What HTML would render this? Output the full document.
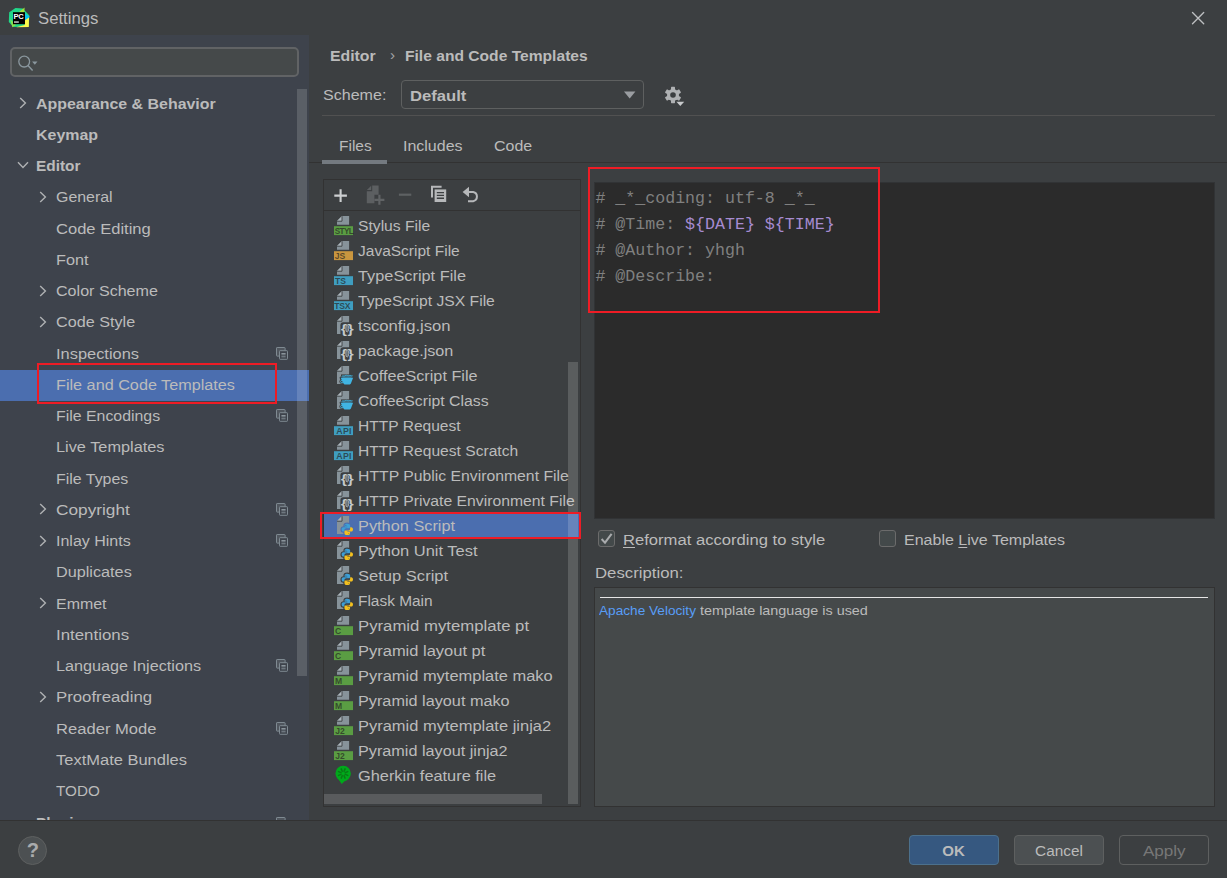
<!DOCTYPE html>
<html lang="en">
<head>
<meta charset="utf-8">
<title>Settings</title>
<style>
*{box-sizing:border-box;margin:0;padding:0}
html,body{width:1227px;height:878px;overflow:hidden;background:#3c3f41}
body{position:relative;font-family:"Liberation Sans",sans-serif;font-size:15.4px;color:#bbbbbb;-webkit-font-smoothing:antialiased}
.abs{position:absolute}
.t{white-space:pre;display:inline-block}
/* title bar */
#title{position:absolute;left:0;top:0;width:1227px;height:35px;background:#3c3f41}
#title .ttl{position:absolute;left:38px;top:9.1px;font-size:16px;line-height:20px;color:#bbbbbb}
#logo{position:absolute;left:8px;top:7px}
#close{position:absolute;left:1190px;top:10px}
/* sidebar */
#side{position:absolute;left:0;top:35px;width:309px;height:785px;background:#3e434c;overflow:hidden}
#search{position:absolute;left:10px;top:12.4px;width:289px;height:30px;background:#45494a;border:2px solid #616365;border-radius:5px}
#search svg{position:absolute;left:5.5px;top:4px}
.srow{position:absolute;left:0;width:309px;height:31.25px}
.srow.sel{background:#4b6eaf;height:31px}
.srow.b{font-weight:bold}
.srow .lbl{position:absolute;top:4.7px;line-height:20.7px}
.srow .cv{position:absolute;line-height:0}
.srow .pj{position:absolute;left:275.6px;top:7.8px;line-height:0}
#sthumb{position:absolute;left:297px;top:54px;width:10px;height:587px;background:rgba(255,255,255,0.15)}
/* bottom */
#sep{position:absolute;left:0;top:820px;width:1227px;height:1px;background:#323232}
.btn{position:absolute;top:835px;width:90px;height:30px;border-radius:4px;border:1px solid #5e6060;background:#4c5052;text-align:center;line-height:29.8px;color:#bbbbbb}
#ok{left:909px;background:#365880;border-color:#4c708c;font-weight:bold}
#cancel{left:1014px}
#apply{left:1119px;background:#3c3f41;color:#777777}
#help{position:absolute;left:18px;top:836px;width:29px;height:29px;border-radius:50%;background:#4c5052;border:1px solid #5e6060;text-align:center;line-height:27.4px;font-weight:bold;font-size:20px;color:#a9abad;padding-left:0.6px}
/* right header */
#bc{position:absolute;left:330px;top:46.1px;font-weight:bold;line-height:20.7px;white-space:nowrap}
#schemeL{position:absolute;left:323px;top:85px;line-height:20.7px}
#combo{position:absolute;left:401px;top:80px;width:243px;height:29px;border:1px solid #5e6060;border-radius:4px;font-weight:bold}
#combo .t{position:absolute;left:7.8px;top:4.6px;line-height:20.7px}
#combo svg{position:absolute;left:222px;top:10.4px}
#gear{position:absolute;left:664px;top:86px}
#hsep{position:absolute;left:322px;top:115px;width:893px;height:1px;background:#515151}
.tab{position:absolute;top:136.2px;line-height:20.7px}
#tabline{position:absolute;left:309px;top:162px;width:918px;height:1px;background:#323232}
#tabul{position:absolute;left:322px;top:160px;width:65px;height:4px;background:#747a80}
/* list */
#list{position:absolute;left:323px;top:179px;width:258px;height:628px;border:1px solid #323232;overflow:hidden}
#tb{position:absolute;left:0;top:0;width:256px;height:31px;border-bottom:1px solid #323232}
#tb svg{position:absolute}
#rows{position:absolute;left:0;top:31px;width:256px;height:595px;overflow:hidden}
.frow{position:absolute;left:0;width:256px;height:25px}
.frow.sel{background:#4b6eaf}
.frow .fi{position:absolute;left:10px;top:3px}
.frow .fl{position:absolute;left:34.4px;top:3.4px;line-height:20.7px}
#vthumb{position:absolute;left:244px;top:182px;width:10px;height:442px;background:rgba(255,255,255,0.155)}
#hthumb{position:absolute;left:0;top:614px;width:218px;height:10px;background:#595b5d}
/* editor */
#ed{position:absolute;left:594px;top:182px;width:621px;height:337px;background:#2b2b2b;border:1px solid #313335}
#code{position:absolute;left:0.4px;top:3px;font-family:"Liberation Mono",monospace;font-size:16.62px;line-height:26px;color:#808080;white-space:pre}
#code .v{color:#a78bd1}
.cb{position:absolute;top:529.5px;width:17px;height:17px;border:1px solid #6b6b6b;border-radius:3px;background:#43494a}
.cbl{position:absolute;top:530.3px;line-height:20.7px}
.cbl u{text-decoration:underline;text-underline-offset:2px;text-decoration-thickness:1px}
#descL{position:absolute;left:594.5px;top:563.2px;line-height:20.7px}
#desc{position:absolute;left:594px;top:587px;width:621px;height:220px;background:#45494a;border:1px solid #323232}
#desc .hr{position:absolute;left:5px;top:9px;width:608px;height:1.3px;background:#e6e6e6}
#desc .tx{position:absolute;left:4px;top:15.4px;font-size:13px;line-height:16px;color:#bbbbbb;white-space:nowrap}
#desc .tx .lk{color:#589df6}
.red{position:absolute;border:2px solid #ee1c25}
</style>
</head>
<body>
<div id="title">
  <svg id="logo" width="22" height="21" viewBox="0 0 22 21">
    <path d="M1.2 5.2 L7.5 1 L14.8 1.6 L21.4 8.6 L20.6 19.4 L5.6 20 L0.8 15 Z" fill="#21d789"/>
    <path d="M11 5 L16.6 0.6 L16.2 6 Z" fill="#a4e33a"/>
    <path d="M16 6 L21.6 9.6 L19 14 L16 12 Z" fill="#07c3f2"/>
    <path d="M4.4 20.2 L2 12 L8 18 Z" fill="#8be04c"/>
    <path d="M8 20.2 L20.8 20 L21 10.5 L16 14 L16.8 18 Z" fill="#fcf84a"/>
    <rect x="5" y="5.2" width="12" height="12" fill="#000"/>
    <text x="5.6" y="11.6" font-family="Liberation Sans, sans-serif" font-weight="bold" font-size="7.6" fill="#fff" letter-spacing="-0.3">PC</text>
    <rect x="6" y="14.4" width="4.8" height="1.3" fill="#e6e6e6"/>
  </svg>
  <div class="ttl"><span class="t" id="ttl" style="transform:scaleX(1.0430);transform-origin:0 50%;">Settings</span></div>
  <svg id="close" width="16" height="16" viewBox="0 0 16 16"><path d="M2.5 2.5 L13.7 13.7 M13.7 2.5 L2.5 13.7" stroke="#bdbfc1" stroke-width="1.35" stroke-linecap="round" fill="none"/></svg>
</div>

<div id="side">
  <div id="search"><svg width="24" height="20" viewBox="0 0 24 20"><circle cx="6.2" cy="8.6" r="5.4" fill="none" stroke="#8a979e" stroke-width="1.3"/><path d="M10 12.6 L14.6 17.4" stroke="#8a979e" stroke-width="1.5"/><path d="M14.1 8.6 H19.5 L16.8 11.8 Z" fill="#8a979e"/></svg></div>
<div class="srow b" style="top:54.00px"><span class="cv" style="left:19.3px;top:8.2px"><svg class="chev" width="8" height="12" viewBox="0 0 8 12"><path d="M1.2 1 L6.4 6 L1.2 11" fill="none" stroke="#afb1b3" stroke-width="1.4"/></svg></span><span class="lbl" style="left:36px"><span class="t" id="s0" style="transform:scaleX(1.0350);transform-origin:0 50%;">Appearance &amp; Behavior</span></span></div>
<div class="srow b" style="top:85.25px"><span class="lbl" style="left:36px"><span class="t" id="s1" style="transform:scaleX(1.0360);transform-origin:0 50%;">Keymap</span></span></div>
<div class="srow b" style="top:116.50px"><span class="cv" style="left:17px;top:9.3px"><svg class="chev" width="12" height="8" viewBox="0 0 12 8"><path d="M1 1.2 L6 6.4 L11 1.2" fill="none" stroke="#afb1b3" stroke-width="1.4"/></svg></span><span class="lbl" style="left:36px"><span class="t" id="s2" style="transform:scaleX(1.0000);transform-origin:0 50%;">Editor</span></span></div>
<div class="srow" style="top:147.75px"><span class="cv" style="left:39.3px;top:8.2px"><svg class="chev" width="8" height="12" viewBox="0 0 8 12"><path d="M1.2 1 L6.4 6 L1.2 11" fill="none" stroke="#afb1b3" stroke-width="1.4"/></svg></span><span class="lbl" style="left:56px"><span class="t" id="s3" style="transform:scaleX(1.0340);transform-origin:0 50%;">General</span></span></div>
<div class="srow" style="top:179.00px"><span class="lbl" style="left:56px"><span class="t" id="s4" style="transform:scaleX(1.0750);transform-origin:0 50%;">Code Editing</span></span></div>
<div class="srow" style="top:210.25px"><span class="lbl" style="left:56px"><span class="t" id="s5" style="transform:scaleX(1.0570);transform-origin:0 50%;">Font</span></span></div>
<div class="srow" style="top:241.50px"><span class="cv" style="left:39.3px;top:8.2px"><svg class="chev" width="8" height="12" viewBox="0 0 8 12"><path d="M1.2 1 L6.4 6 L1.2 11" fill="none" stroke="#afb1b3" stroke-width="1.4"/></svg></span><span class="lbl" style="left:56px"><span class="t" id="s6" style="transform:scaleX(1.0450);transform-origin:0 50%;">Color Scheme</span></span></div>
<div class="srow" style="top:272.75px"><span class="cv" style="left:39.3px;top:8.2px"><svg class="chev" width="8" height="12" viewBox="0 0 8 12"><path d="M1.2 1 L6.4 6 L1.2 11" fill="none" stroke="#afb1b3" stroke-width="1.4"/></svg></span><span class="lbl" style="left:56px"><span class="t" id="s7" style="transform:scaleX(1.0510);transform-origin:0 50%;">Code Style</span></span></div>
<div class="srow" style="top:304.00px"><span class="lbl" style="left:56px"><span class="t" id="s8" style="transform:scaleX(1.0660);transform-origin:0 50%;">Inspections</span></span><span class="pj"><svg class="proj" width="12" height="13" viewBox="0 0 12 13"><rect x="0.5" y="0.5" width="8.6" height="8.6" rx="0.6" fill="#50565e" stroke="#7f8a92" stroke-width="1"/><rect x="3.5" y="3.7" width="8" height="8.6" rx="0.6" fill="#3e434c" stroke="#7f8a92" stroke-width="1"/><rect x="5.4" y="6" width="4.2" height="1.6" fill="#8a949b"/><rect x="5.4" y="8.6" width="4.2" height="1.8" fill="#6f7880"/></svg></span></div>
<div class="srow sel" style="top:335.00px"><span class="lbl" style="left:56px"><span class="t" id="s9" style="transform:scaleX(1.0530);transform-origin:0 50%;">File and Code Templates</span></span></div>
<div class="srow" style="top:366.50px"><span class="lbl" style="left:56px"><span class="t" id="s10" style="transform:scaleX(1.0310);transform-origin:0 50%;">File Encodings</span></span><span class="pj"><svg class="proj" width="12" height="13" viewBox="0 0 12 13"><rect x="0.5" y="0.5" width="8.6" height="8.6" rx="0.6" fill="#50565e" stroke="#7f8a92" stroke-width="1"/><rect x="3.5" y="3.7" width="8" height="8.6" rx="0.6" fill="#3e434c" stroke="#7f8a92" stroke-width="1"/><rect x="5.4" y="6" width="4.2" height="1.6" fill="#8a949b"/><rect x="5.4" y="8.6" width="4.2" height="1.8" fill="#6f7880"/></svg></span></div>
<div class="srow" style="top:397.75px"><span class="lbl" style="left:56px"><span class="t" id="s11" style="transform:scaleX(1.0600);transform-origin:0 50%;">Live Templates</span></span></div>
<div class="srow" style="top:429.00px"><span class="lbl" style="left:56px"><span class="t" id="s12" style="transform:scaleX(1.0350);transform-origin:0 50%;">File Types</span></span></div>
<div class="srow" style="top:460.25px"><span class="cv" style="left:39.3px;top:8.2px"><svg class="chev" width="8" height="12" viewBox="0 0 8 12"><path d="M1.2 1 L6.4 6 L1.2 11" fill="none" stroke="#afb1b3" stroke-width="1.4"/></svg></span><span class="lbl" style="left:56px"><span class="t" id="s13" style="transform:scaleX(1.1210);transform-origin:0 50%;">Copyright</span></span><span class="pj"><svg class="proj" width="12" height="13" viewBox="0 0 12 13"><rect x="0.5" y="0.5" width="8.6" height="8.6" rx="0.6" fill="#50565e" stroke="#7f8a92" stroke-width="1"/><rect x="3.5" y="3.7" width="8" height="8.6" rx="0.6" fill="#3e434c" stroke="#7f8a92" stroke-width="1"/><rect x="5.4" y="6" width="4.2" height="1.6" fill="#8a949b"/><rect x="5.4" y="8.6" width="4.2" height="1.8" fill="#6f7880"/></svg></span></div>
<div class="srow" style="top:491.50px"><span class="cv" style="left:39.3px;top:8.2px"><svg class="chev" width="8" height="12" viewBox="0 0 8 12"><path d="M1.2 1 L6.4 6 L1.2 11" fill="none" stroke="#afb1b3" stroke-width="1.4"/></svg></span><span class="lbl" style="left:56px"><span class="t" id="s14" style="transform:scaleX(1.0400);transform-origin:0 50%;">Inlay Hints</span></span><span class="pj"><svg class="proj" width="12" height="13" viewBox="0 0 12 13"><rect x="0.5" y="0.5" width="8.6" height="8.6" rx="0.6" fill="#50565e" stroke="#7f8a92" stroke-width="1"/><rect x="3.5" y="3.7" width="8" height="8.6" rx="0.6" fill="#3e434c" stroke="#7f8a92" stroke-width="1"/><rect x="5.4" y="6" width="4.2" height="1.6" fill="#8a949b"/><rect x="5.4" y="8.6" width="4.2" height="1.8" fill="#6f7880"/></svg></span></div>
<div class="srow" style="top:522.75px"><span class="lbl" style="left:56px"><span class="t" id="s15" style="transform:scaleX(1.0540);transform-origin:0 50%;">Duplicates</span></span></div>
<div class="srow" style="top:554.00px"><span class="cv" style="left:39.3px;top:8.2px"><svg class="chev" width="8" height="12" viewBox="0 0 8 12"><path d="M1.2 1 L6.4 6 L1.2 11" fill="none" stroke="#afb1b3" stroke-width="1.4"/></svg></span><span class="lbl" style="left:56px"><span class="t" id="s16" style="transform:scaleX(1.0360);transform-origin:0 50%;">Emmet</span></span></div>
<div class="srow" style="top:585.25px"><span class="lbl" style="left:56px"><span class="t" id="s17" style="transform:scaleX(1.0950);transform-origin:0 50%;">Intentions</span></span></div>
<div class="srow" style="top:616.50px"><span class="lbl" style="left:56px"><span class="t" id="s18" style="transform:scaleX(1.0530);transform-origin:0 50%;">Language Injections</span></span><span class="pj"><svg class="proj" width="12" height="13" viewBox="0 0 12 13"><rect x="0.5" y="0.5" width="8.6" height="8.6" rx="0.6" fill="#50565e" stroke="#7f8a92" stroke-width="1"/><rect x="3.5" y="3.7" width="8" height="8.6" rx="0.6" fill="#3e434c" stroke="#7f8a92" stroke-width="1"/><rect x="5.4" y="6" width="4.2" height="1.6" fill="#8a949b"/><rect x="5.4" y="8.6" width="4.2" height="1.8" fill="#6f7880"/></svg></span></div>
<div class="srow" style="top:647.75px"><span class="cv" style="left:39.3px;top:8.2px"><svg class="chev" width="8" height="12" viewBox="0 0 8 12"><path d="M1.2 1 L6.4 6 L1.2 11" fill="none" stroke="#afb1b3" stroke-width="1.4"/></svg></span><span class="lbl" style="left:56px"><span class="t" id="s19" style="transform:scaleX(1.0900);transform-origin:0 50%;">Proofreading</span></span></div>
<div class="srow" style="top:679.00px"><span class="lbl" style="left:56px"><span class="t" id="s20" style="transform:scaleX(1.0780);transform-origin:0 50%;">Reader Mode</span></span><span class="pj"><svg class="proj" width="12" height="13" viewBox="0 0 12 13"><rect x="0.5" y="0.5" width="8.6" height="8.6" rx="0.6" fill="#50565e" stroke="#7f8a92" stroke-width="1"/><rect x="3.5" y="3.7" width="8" height="8.6" rx="0.6" fill="#3e434c" stroke="#7f8a92" stroke-width="1"/><rect x="5.4" y="6" width="4.2" height="1.6" fill="#8a949b"/><rect x="5.4" y="8.6" width="4.2" height="1.8" fill="#6f7880"/></svg></span></div>
<div class="srow" style="top:710.25px"><span class="lbl" style="left:56px"><span class="t" id="s21" style="transform:scaleX(1.0710);transform-origin:0 50%;">TextMate Bundles</span></span></div>
<div class="srow" style="top:741.50px"><span class="lbl" style="left:56px"><span class="t" id="s22" style="transform:scaleX(0.9900);transform-origin:0 50%;">TODO</span></span></div>
<div class="srow b" style="top:773.75px"><span class="lbl" style="left:36px"><span class="t" id="s23" style="">Plugins</span></span><span class="pj"><svg class="proj" width="12" height="13" viewBox="0 0 12 13"><rect x="0.5" y="0.5" width="8.6" height="8.6" rx="0.6" fill="#50565e" stroke="#7f8a92" stroke-width="1"/><rect x="3.5" y="3.7" width="8" height="8.6" rx="0.6" fill="#3e434c" stroke="#7f8a92" stroke-width="1"/><rect x="5.4" y="6" width="4.2" height="1.6" fill="#8a949b"/><rect x="5.4" y="8.6" width="4.2" height="1.8" fill="#6f7880"/></svg></span></div>
  <div id="sthumb"></div>
</div>

<div id="bc"><span class="t" id="bc1" style="transform:scaleX(1.0270);transform-origin:0 50%;">Editor</span><span class="abs" style="left:60px;top:-1px;font-weight:normal;color:#a2a4a6">›</span><span class="abs" style="left:75px;top:0"><span class="t" id="bc2" style="transform:scaleX(1.0140);transform-origin:0 50%;">File and Code Templates</span></span></div>
<div id="schemeL"><span class="t" id="sch" style="transform:scaleX(1.0430);transform-origin:0 50%;">Scheme:</span></div>
<div id="combo"><span class="t" id="dflt" style="transform:scaleX(1.0810);transform-origin:0 50%;">Default</span><svg width="12" height="8" viewBox="0 0 12 8"><path d="M0 0.4 H11.4 L5.7 7.4 Z" fill="#9a9da1"/></svg></div>
<svg id="gear" width="22" height="22" viewBox="0 0 22 22">
  <g transform="translate(9,9)" fill="#afb1b3">
    <g id="teeth">
      <rect x="-2" y="-8.2" width="4" height="16.4" rx="0.6"/>
      <rect x="-2" y="-8.2" width="4" height="16.4" rx="0.6" transform="rotate(60)"/>
      <rect x="-2" y="-8.2" width="4" height="16.4" rx="0.6" transform="rotate(120)"/>
    </g>
    <circle r="6"/>
    <circle r="2.8" fill="#3c3f41"/>
  </g>
  <path d="M12.4 15.8 H20.2 L16.3 20 Z" fill="#c8cacc"/>
</svg>
<div id="hsep"></div>
<div class="tab" style="left:339px"><span class="t" id="tab1" style="transform:scaleX(1.0070);transform-origin:0 50%;">Files</span></div>
<div class="tab" style="left:403px"><span class="t" id="tab2" style="transform:scaleX(1.0380);transform-origin:0 50%;">Includes</span></div>
<div class="tab" style="left:494px"><span class="t" id="tab3" style="transform:scaleX(1.0370);transform-origin:0 50%;">Code</span></div>
<div id="tabline"></div>
<div id="tabul"></div>

<div id="list">
  <div id="tb">
    <svg style="left:9.6px;top:8.6px" width="14" height="14" viewBox="0 0 14 14"><path d="M6.6 0.3 V12.9 M0.3 6.6 H12.9" stroke="#cdcfd1" stroke-width="2.1" fill="none"/></svg>
    <svg style="left:42px;top:5.4px" width="20" height="21" viewBox="0 0 20 21"><path d="M6.2 0.6 H12.6 V9.8 H8.4 V18.2 H0.8 V6.2 H6.2 Z" fill="#5c5f61"/><path d="M0.9 5 L5.2 0.7 V5 Z" fill="#5c5f61"/><path d="M13.4 9.8 V19.8 M8.4 14.8 H18.4" stroke="#606365" stroke-width="2.2" fill="none"/></svg>
    <svg style="left:74px;top:12.8px" width="15" height="4" viewBox="0 0 15 4"><rect x="0.9" y="0.6" width="12.4" height="2.2" fill="#5e6163"/></svg>
    <svg style="left:105.6px;top:5px" width="18" height="18" viewBox="0 0 18 18"><path d="M1 0.8 H11.6 V2.8 H3 V12.4 H1 Z" fill="#b6b8ba"/><rect x="4.6" y="4.4" width="11.6" height="12.6" fill="#b6b8ba"/><path d="M6.8 7.6 H14 M6.8 10.4 H14 M6.8 13.2 H14" stroke="#3c3f41" stroke-width="1.4"/></svg>
    <svg style="left:138px;top:6.2px" width="19" height="17" viewBox="0 0 19 17"><path d="M4.6 6 H11.2 A4.7 4.7 0 0 1 11.2 15.2 H6" fill="none" stroke="#b6b8ba" stroke-width="2"/><path d="M0.6 6 L7 0.8 V11.2 Z" fill="#b6b8ba"/></svg>
  </div>
  <div id="rows">
<div class="frow" style="top:2px"><svg class="fi" width="20" height="20" viewBox="0 0 20 20"><path d="M8 0 H15.1 V8.7 H3 V5 Z" fill="#87939a"/><path d="M3 5 L8 0 V5 Z" fill="#aab4ba"/><path d="M3 5.2 H8 V0.2" fill="none" stroke="#3c3f41" stroke-width="0.9"/><rect x="0" y="10.2" width="19" height="8.9" fill="#5a9d43"/><text x="10" y="18" font-family="Liberation Sans, sans-serif" font-weight="bold" font-size="8.2" text-anchor="middle" fill="#231f20" fill-opacity="0.68" letter-spacing="-0.6">STYL</text></svg><span class="fl"><span class="t" id="f0" style="transform:scaleX(1.0180);transform-origin:0 50%;">Stylus File</span></span></div>
<div class="frow" style="top:27px"><svg class="fi" width="20" height="20" viewBox="0 0 20 20"><path d="M8 0 H15.1 V8.7 H3 V5 Z" fill="#87939a"/><path d="M3 5 L8 0 V5 Z" fill="#aab4ba"/><path d="M3 5.2 H8 V0.2" fill="none" stroke="#3c3f41" stroke-width="0.9"/><rect x="0" y="10.2" width="19" height="8.9" fill="#c9963f"/><text x="6" y="18" font-family="Liberation Sans, sans-serif" font-weight="bold" font-size="8.6" text-anchor="middle" fill="#231f20" fill-opacity="0.68" letter-spacing="0">JS</text></svg><span class="fl"><span class="t" id="f1" style="transform:scaleX(1.0080);transform-origin:0 50%;">JavaScript File</span></span></div>
<div class="frow" style="top:52px"><svg class="fi" width="20" height="20" viewBox="0 0 20 20"><path d="M8 0 H15.1 V8.7 H3 V5 Z" fill="#87939a"/><path d="M3 5 L8 0 V5 Z" fill="#aab4ba"/><path d="M3 5.2 H8 V0.2" fill="none" stroke="#3c3f41" stroke-width="0.9"/><rect x="0" y="10.2" width="19" height="8.9" fill="#3f9ec0"/><text x="6.4" y="18" font-family="Liberation Sans, sans-serif" font-weight="bold" font-size="8.6" text-anchor="middle" fill="#231f20" fill-opacity="0.68" letter-spacing="0">TS</text></svg><span class="fl"><span class="t" id="f2" style="transform:scaleX(1.0610);transform-origin:0 50%;">TypeScript File</span></span></div>
<div class="frow" style="top:77px"><svg class="fi" width="20" height="20" viewBox="0 0 20 20"><path d="M8 0 H15.1 V8.7 H3 V5 Z" fill="#87939a"/><path d="M3 5 L8 0 V5 Z" fill="#aab4ba"/><path d="M3 5.2 H8 V0.2" fill="none" stroke="#3c3f41" stroke-width="0.9"/><rect x="0" y="10.2" width="19" height="8.9" fill="#3f9ec0"/><text x="8.2" y="18" font-family="Liberation Sans, sans-serif" font-weight="bold" font-size="8.6" text-anchor="middle" fill="#231f20" fill-opacity="0.68" letter-spacing="-0.2">TSX</text></svg><span class="fl"><span class="t" id="f3" style="transform:scaleX(1.0190);transform-origin:0 50%;">TypeScript JSX File</span></span></div>
<div class="frow" style="top:102px"><svg class="fi" width="20" height="20" viewBox="0 0 20 20"><path d="M8 0 H15.1 V18 H3 V5 Z" fill="#87939a"/><path d="M3 5 L8 0 V5 Z" fill="#aab4ba"/><path d="M3 5.2 H8 V0.2" fill="none" stroke="#3c3f41" stroke-width="0.9"/><rect x="6.4" y="6.2" width="13.6" height="13.8" rx="3" fill="#3c3f41"/><g font-family="Liberation Sans, sans-serif" font-size="13.2" font-weight="bold" fill="#c3c8cb"><text x="6.7" y="16.5" textLength="6.2" lengthAdjust="spacingAndGlyphs">{</text><text x="13.5" y="16.5" textLength="6.2" lengthAdjust="spacingAndGlyphs">}</text></g><ellipse cx="13.2" cy="12.45" rx="1.5" ry="3.6" fill="#69737a" stroke="#a9b1b6" stroke-width="0.8"/></svg><span class="fl"><span class="t" id="f4" style="transform:scaleX(1.0820);transform-origin:0 50%;">tsconfig.json</span></span></div>
<div class="frow" style="top:127px"><svg class="fi" width="20" height="20" viewBox="0 0 20 20"><path d="M8 0 H15.1 V18 H3 V5 Z" fill="#87939a"/><path d="M3 5 L8 0 V5 Z" fill="#aab4ba"/><path d="M3 5.2 H8 V0.2" fill="none" stroke="#3c3f41" stroke-width="0.9"/><rect x="6.4" y="6.2" width="13.6" height="13.8" rx="3" fill="#3c3f41"/><g font-family="Liberation Sans, sans-serif" font-size="13.2" font-weight="bold" fill="#c3c8cb"><text x="6.7" y="16.5" textLength="6.2" lengthAdjust="spacingAndGlyphs">{</text><text x="13.5" y="16.5" textLength="6.2" lengthAdjust="spacingAndGlyphs">}</text></g><ellipse cx="13.2" cy="12.45" rx="1.5" ry="3.6" fill="#69737a" stroke="#a9b1b6" stroke-width="0.8"/></svg><span class="fl"><span class="t" id="f5" style="transform:scaleX(1.0510);transform-origin:0 50%;">package.json</span></span></div>
<div class="frow" style="top:152px"><svg class="fi" width="20" height="20" viewBox="0 0 20 20"><path d="M8 0 H15.1 V18 H3 V5 Z" fill="#87939a"/><path d="M3 5 L8 0 V5 Z" fill="#aab4ba"/><path d="M3 5.2 H8 V0.2" fill="none" stroke="#3c3f41" stroke-width="0.9"/><path d="M6.7 11.7 H19.1 L16.9 17.6 Q16.6 18.4 15.8 18.4 H10.6 Q9.8 18.4 9.5 17.6 Z" fill="#3c3f41" stroke="#3c3f41" stroke-width="2.2" stroke-linejoin="round"/><rect x="7" y="8.4" width="12.4" height="3.4" fill="#3c3f41"/><circle cx="7.7" cy="15.6" r="2.3" fill="#3c3f41"/><path d="M6.7 11.7 H19.1 L16.9 17.6 Q16.6 18.4 15.8 18.4 H10.6 Q9.8 18.4 9.5 17.6 Z" fill="#40b4e2"/><circle cx="7.9" cy="15.6" r="1.25" fill="none" stroke="#40b4e2" stroke-width="0.9"/><path d="M7.6 10.6 C8.8 9.2 10 10.6 11.2 9.6 C12.6 8.6 13.8 10.4 15.2 9.5 C16.4 8.8 17.4 10.4 18.6 9.8" fill="none" stroke="#40b4e2" stroke-width="0.9"/><path d="M8.4 11 H17.6" stroke="#40b4e2" stroke-width="0.8"/></svg><span class="fl"><span class="t" id="f6" style="transform:scaleX(1.0530);transform-origin:0 50%;">CoffeeScript File</span></span></div>
<div class="frow" style="top:177px"><svg class="fi" width="20" height="20" viewBox="0 0 20 20"><path d="M8 0 H15.1 V18 H3 V5 Z" fill="#87939a"/><path d="M3 5 L8 0 V5 Z" fill="#aab4ba"/><path d="M3 5.2 H8 V0.2" fill="none" stroke="#3c3f41" stroke-width="0.9"/><path d="M6.7 11.7 H19.1 L16.9 17.6 Q16.6 18.4 15.8 18.4 H10.6 Q9.8 18.4 9.5 17.6 Z" fill="#3c3f41" stroke="#3c3f41" stroke-width="2.2" stroke-linejoin="round"/><rect x="7" y="8.4" width="12.4" height="3.4" fill="#3c3f41"/><circle cx="7.7" cy="15.6" r="2.3" fill="#3c3f41"/><path d="M6.7 11.7 H19.1 L16.9 17.6 Q16.6 18.4 15.8 18.4 H10.6 Q9.8 18.4 9.5 17.6 Z" fill="#40b4e2"/><circle cx="7.9" cy="15.6" r="1.25" fill="none" stroke="#40b4e2" stroke-width="0.9"/><path d="M7.6 10.6 C8.8 9.2 10 10.6 11.2 9.6 C12.6 8.6 13.8 10.4 15.2 9.5 C16.4 8.8 17.4 10.4 18.6 9.8" fill="none" stroke="#40b4e2" stroke-width="0.9"/><path d="M8.4 11 H17.6" stroke="#40b4e2" stroke-width="0.8"/></svg><span class="fl"><span class="t" id="f7" style="transform:scaleX(1.0270);transform-origin:0 50%;">CoffeeScript Class</span></span></div>
<div class="frow" style="top:202px"><svg class="fi" width="20" height="20" viewBox="0 0 20 20"><path d="M8 0 H15.1 V8.7 H3 V5 Z" fill="#87939a"/><path d="M3 5 L8 0 V5 Z" fill="#aab4ba"/><path d="M3 5.2 H8 V0.2" fill="none" stroke="#3c3f41" stroke-width="0.9"/><rect x="0" y="10.2" width="19" height="8.9" fill="#3f9ec0"/><text x="10" y="18" font-family="Liberation Sans, sans-serif" font-weight="bold" font-size="8.8" text-anchor="middle" fill="#231f20" fill-opacity="0.68" letter-spacing="0.2">API</text></svg><span class="fl"><span class="t" id="f8" style="transform:scaleX(1.0110);transform-origin:0 50%;">HTTP Request</span></span></div>
<div class="frow" style="top:227px"><svg class="fi" width="20" height="20" viewBox="0 0 20 20"><path d="M8 0 H15.1 V8.7 H3 V5 Z" fill="#87939a"/><path d="M3 5 L8 0 V5 Z" fill="#aab4ba"/><path d="M3 5.2 H8 V0.2" fill="none" stroke="#3c3f41" stroke-width="0.9"/><rect x="0" y="10.2" width="19" height="8.9" fill="#3f9ec0"/><text x="10" y="18" font-family="Liberation Sans, sans-serif" font-weight="bold" font-size="8.8" text-anchor="middle" fill="#231f20" fill-opacity="0.68" letter-spacing="0.2">API</text></svg><span class="fl"><span class="t" id="f9" style="transform:scaleX(1.0140);transform-origin:0 50%;">HTTP Request Scratch</span></span></div>
<div class="frow" style="top:252px"><svg class="fi" width="20" height="20" viewBox="0 0 20 20"><path d="M8 0 H15.1 V18 H3 V5 Z" fill="#87939a"/><path d="M3 5 L8 0 V5 Z" fill="#aab4ba"/><path d="M3 5.2 H8 V0.2" fill="none" stroke="#3c3f41" stroke-width="0.9"/><rect x="6.4" y="6.2" width="13.6" height="13.8" rx="3" fill="#3c3f41"/><g font-family="Liberation Sans, sans-serif" font-size="13.2" font-weight="bold" fill="#c3c8cb"><text x="6.7" y="16.5" textLength="6.2" lengthAdjust="spacingAndGlyphs">{</text><text x="13.5" y="16.5" textLength="6.2" lengthAdjust="spacingAndGlyphs">}</text></g><ellipse cx="13.2" cy="12.45" rx="1.5" ry="3.6" fill="#69737a" stroke="#a9b1b6" stroke-width="0.8"/></svg><span class="fl"><span class="t" id="f10" style="transform:scaleX(1.0240);transform-origin:0 50%;">HTTP Public Environment File</span></span></div>
<div class="frow" style="top:277px"><svg class="fi" width="20" height="20" viewBox="0 0 20 20"><path d="M8 0 H15.1 V18 H3 V5 Z" fill="#87939a"/><path d="M3 5 L8 0 V5 Z" fill="#aab4ba"/><path d="M3 5.2 H8 V0.2" fill="none" stroke="#3c3f41" stroke-width="0.9"/><rect x="6.4" y="6.2" width="13.6" height="13.8" rx="3" fill="#3c3f41"/><g font-family="Liberation Sans, sans-serif" font-size="13.2" font-weight="bold" fill="#c3c8cb"><text x="6.7" y="16.5" textLength="6.2" lengthAdjust="spacingAndGlyphs">{</text><text x="13.5" y="16.5" textLength="6.2" lengthAdjust="spacingAndGlyphs">}</text></g><ellipse cx="13.2" cy="12.45" rx="1.5" ry="3.6" fill="#69737a" stroke="#a9b1b6" stroke-width="0.8"/></svg><span class="fl"><span class="t" id="f11" style="transform:scaleX(1.0230);transform-origin:0 50%;">HTTP Private Environment File</span></span></div>
<div class="frow sel" style="top:302px"><svg class="fi" width="20" height="20" viewBox="0 0 20 20"><path d="M8 0 H15.1 V18 H3 V5 Z" fill="#87939a"/><path d="M3 5 L8 0 V5 Z" fill="#aab4ba"/><path d="M3 5.2 H8 V0.2" fill="none" stroke="#3c3f41" stroke-width="0.9"/><g transform="translate(7.6,7.7) scale(0.95)"><path d="M5.9 0 C4.2 0 3.1 0.7 3.1 2 V3.3 H6 V3.8 H1.9 C0.7 3.8 0 4.7 0 6 C0 7.3 0.7 8.3 1.9 8.3 H3 V6.8 C3 5.7 3.9 4.9 5 4.9 H7.9 C8.7 4.9 9 4.3 9 3.6 V2 C9 0.8 7.8 0 5.9 0 Z" fill="#4b6eaf" stroke="#4b6eaf" stroke-width="2.4" stroke-linejoin="round"/><path d="M6.1 12 C7.8 12 8.9 11.3 8.9 10 V8.7 H6 V8.2 H10.1 C11.3 8.2 12 7.3 12 6 C12 4.7 11.3 3.7 10.1 3.7 H9 V5.2 C9 6.3 8.1 7.1 7 7.1 H4.1 C3.3 7.1 3 7.7 3 8.4 V10 C3 11.2 4.2 12 6.1 12 Z" fill="#4b6eaf" stroke="#4b6eaf" stroke-width="2.4" stroke-linejoin="round"/><path d="M5.9 0 C4.2 0 3.1 0.7 3.1 2 V3.3 H6 V3.8 H1.9 C0.7 3.8 0 4.7 0 6 C0 7.3 0.7 8.3 1.9 8.3 H3 V6.8 C3 5.7 3.9 4.9 5 4.9 H7.9 C8.7 4.9 9 4.3 9 3.6 V2 C9 0.8 7.8 0 5.9 0 Z" fill="#3d9fd6"/><path d="M6.1 12 C7.8 12 8.9 11.3 8.9 10 V8.7 H6 V8.2 H10.1 C11.3 8.2 12 7.3 12 6 C12 4.7 11.3 3.7 10.1 3.7 H9 V5.2 C9 6.3 8.1 7.1 7 7.1 H4.1 C3.3 7.1 3 7.7 3 8.4 V10 C3 11.2 4.2 12 6.1 12 Z" fill="#f3c01f"/><circle cx="4.5" cy="1.7" r="0.6" fill="#2b2b2b" fill-opacity="0.35"/><circle cx="7.5" cy="10.3" r="0.6" fill="#2b2b2b" fill-opacity="0.3"/></g></svg><span class="fl"><span class="t" id="f12" style="transform:scaleX(1.0610);transform-origin:0 50%;">Python Script</span></span></div>
<div class="frow" style="top:327px"><svg class="fi" width="20" height="20" viewBox="0 0 20 20"><path d="M8 0 H15.1 V18 H3 V5 Z" fill="#87939a"/><path d="M3 5 L8 0 V5 Z" fill="#aab4ba"/><path d="M3 5.2 H8 V0.2" fill="none" stroke="#3c3f41" stroke-width="0.9"/><g transform="translate(7.6,7.7) scale(0.95)"><path d="M5.9 0 C4.2 0 3.1 0.7 3.1 2 V3.3 H6 V3.8 H1.9 C0.7 3.8 0 4.7 0 6 C0 7.3 0.7 8.3 1.9 8.3 H3 V6.8 C3 5.7 3.9 4.9 5 4.9 H7.9 C8.7 4.9 9 4.3 9 3.6 V2 C9 0.8 7.8 0 5.9 0 Z" fill="#3c3f41" stroke="#3c3f41" stroke-width="2.4" stroke-linejoin="round"/><path d="M6.1 12 C7.8 12 8.9 11.3 8.9 10 V8.7 H6 V8.2 H10.1 C11.3 8.2 12 7.3 12 6 C12 4.7 11.3 3.7 10.1 3.7 H9 V5.2 C9 6.3 8.1 7.1 7 7.1 H4.1 C3.3 7.1 3 7.7 3 8.4 V10 C3 11.2 4.2 12 6.1 12 Z" fill="#3c3f41" stroke="#3c3f41" stroke-width="2.4" stroke-linejoin="round"/><path d="M5.9 0 C4.2 0 3.1 0.7 3.1 2 V3.3 H6 V3.8 H1.9 C0.7 3.8 0 4.7 0 6 C0 7.3 0.7 8.3 1.9 8.3 H3 V6.8 C3 5.7 3.9 4.9 5 4.9 H7.9 C8.7 4.9 9 4.3 9 3.6 V2 C9 0.8 7.8 0 5.9 0 Z" fill="#3d9fd6"/><path d="M6.1 12 C7.8 12 8.9 11.3 8.9 10 V8.7 H6 V8.2 H10.1 C11.3 8.2 12 7.3 12 6 C12 4.7 11.3 3.7 10.1 3.7 H9 V5.2 C9 6.3 8.1 7.1 7 7.1 H4.1 C3.3 7.1 3 7.7 3 8.4 V10 C3 11.2 4.2 12 6.1 12 Z" fill="#f3c01f"/><circle cx="4.5" cy="1.7" r="0.6" fill="#2b2b2b" fill-opacity="0.35"/><circle cx="7.5" cy="10.3" r="0.6" fill="#2b2b2b" fill-opacity="0.3"/></g></svg><span class="fl"><span class="t" id="f13" style="transform:scaleX(1.0690);transform-origin:0 50%;">Python Unit Test</span></span></div>
<div class="frow" style="top:352px"><svg class="fi" width="20" height="20" viewBox="0 0 20 20"><path d="M8 0 H15.1 V18 H3 V5 Z" fill="#87939a"/><path d="M3 5 L8 0 V5 Z" fill="#aab4ba"/><path d="M3 5.2 H8 V0.2" fill="none" stroke="#3c3f41" stroke-width="0.9"/><g transform="translate(7.6,7.7) scale(0.95)"><path d="M5.9 0 C4.2 0 3.1 0.7 3.1 2 V3.3 H6 V3.8 H1.9 C0.7 3.8 0 4.7 0 6 C0 7.3 0.7 8.3 1.9 8.3 H3 V6.8 C3 5.7 3.9 4.9 5 4.9 H7.9 C8.7 4.9 9 4.3 9 3.6 V2 C9 0.8 7.8 0 5.9 0 Z" fill="#3c3f41" stroke="#3c3f41" stroke-width="2.4" stroke-linejoin="round"/><path d="M6.1 12 C7.8 12 8.9 11.3 8.9 10 V8.7 H6 V8.2 H10.1 C11.3 8.2 12 7.3 12 6 C12 4.7 11.3 3.7 10.1 3.7 H9 V5.2 C9 6.3 8.1 7.1 7 7.1 H4.1 C3.3 7.1 3 7.7 3 8.4 V10 C3 11.2 4.2 12 6.1 12 Z" fill="#3c3f41" stroke="#3c3f41" stroke-width="2.4" stroke-linejoin="round"/><path d="M5.9 0 C4.2 0 3.1 0.7 3.1 2 V3.3 H6 V3.8 H1.9 C0.7 3.8 0 4.7 0 6 C0 7.3 0.7 8.3 1.9 8.3 H3 V6.8 C3 5.7 3.9 4.9 5 4.9 H7.9 C8.7 4.9 9 4.3 9 3.6 V2 C9 0.8 7.8 0 5.9 0 Z" fill="#3d9fd6"/><path d="M6.1 12 C7.8 12 8.9 11.3 8.9 10 V8.7 H6 V8.2 H10.1 C11.3 8.2 12 7.3 12 6 C12 4.7 11.3 3.7 10.1 3.7 H9 V5.2 C9 6.3 8.1 7.1 7 7.1 H4.1 C3.3 7.1 3 7.7 3 8.4 V10 C3 11.2 4.2 12 6.1 12 Z" fill="#f3c01f"/><circle cx="4.5" cy="1.7" r="0.6" fill="#2b2b2b" fill-opacity="0.35"/><circle cx="7.5" cy="10.3" r="0.6" fill="#2b2b2b" fill-opacity="0.3"/></g></svg><span class="fl"><span class="t" id="f14" style="transform:scaleX(1.0750);transform-origin:0 50%;">Setup Script</span></span></div>
<div class="frow" style="top:377px"><svg class="fi" width="20" height="20" viewBox="0 0 20 20"><path d="M8 0 H15.1 V18 H3 V5 Z" fill="#87939a"/><path d="M3 5 L8 0 V5 Z" fill="#aab4ba"/><path d="M3 5.2 H8 V0.2" fill="none" stroke="#3c3f41" stroke-width="0.9"/><g transform="translate(7.6,7.7) scale(0.95)"><path d="M5.9 0 C4.2 0 3.1 0.7 3.1 2 V3.3 H6 V3.8 H1.9 C0.7 3.8 0 4.7 0 6 C0 7.3 0.7 8.3 1.9 8.3 H3 V6.8 C3 5.7 3.9 4.9 5 4.9 H7.9 C8.7 4.9 9 4.3 9 3.6 V2 C9 0.8 7.8 0 5.9 0 Z" fill="#3c3f41" stroke="#3c3f41" stroke-width="2.4" stroke-linejoin="round"/><path d="M6.1 12 C7.8 12 8.9 11.3 8.9 10 V8.7 H6 V8.2 H10.1 C11.3 8.2 12 7.3 12 6 C12 4.7 11.3 3.7 10.1 3.7 H9 V5.2 C9 6.3 8.1 7.1 7 7.1 H4.1 C3.3 7.1 3 7.7 3 8.4 V10 C3 11.2 4.2 12 6.1 12 Z" fill="#3c3f41" stroke="#3c3f41" stroke-width="2.4" stroke-linejoin="round"/><path d="M5.9 0 C4.2 0 3.1 0.7 3.1 2 V3.3 H6 V3.8 H1.9 C0.7 3.8 0 4.7 0 6 C0 7.3 0.7 8.3 1.9 8.3 H3 V6.8 C3 5.7 3.9 4.9 5 4.9 H7.9 C8.7 4.9 9 4.3 9 3.6 V2 C9 0.8 7.8 0 5.9 0 Z" fill="#3d9fd6"/><path d="M6.1 12 C7.8 12 8.9 11.3 8.9 10 V8.7 H6 V8.2 H10.1 C11.3 8.2 12 7.3 12 6 C12 4.7 11.3 3.7 10.1 3.7 H9 V5.2 C9 6.3 8.1 7.1 7 7.1 H4.1 C3.3 7.1 3 7.7 3 8.4 V10 C3 11.2 4.2 12 6.1 12 Z" fill="#f3c01f"/><circle cx="4.5" cy="1.7" r="0.6" fill="#2b2b2b" fill-opacity="0.35"/><circle cx="7.5" cy="10.3" r="0.6" fill="#2b2b2b" fill-opacity="0.3"/></g></svg><span class="fl"><span class="t" id="f15" style="transform:scaleX(1.0030);transform-origin:0 50%;">Flask Main</span></span></div>
<div class="frow" style="top:402px"><svg class="fi" width="20" height="20" viewBox="0 0 20 20"><path d="M8 0 H15.1 V8.7 H3 V5 Z" fill="#87939a"/><path d="M3 5 L8 0 V5 Z" fill="#aab4ba"/><path d="M3 5.2 H8 V0.2" fill="none" stroke="#3c3f41" stroke-width="0.9"/><rect x="0" y="10.2" width="19" height="8.9" fill="#5a9d43"/><text x="4.2" y="18" font-family="Liberation Sans, sans-serif" font-weight="bold" font-size="8.6" text-anchor="middle" fill="#231f20" fill-opacity="0.68" letter-spacing="0">C</text></svg><span class="fl"><span class="t" id="f16" style="transform:scaleX(1.0870);transform-origin:0 50%;">Pyramid mytemplate pt</span></span></div>
<div class="frow" style="top:427px"><svg class="fi" width="20" height="20" viewBox="0 0 20 20"><path d="M8 0 H15.1 V8.7 H3 V5 Z" fill="#87939a"/><path d="M3 5 L8 0 V5 Z" fill="#aab4ba"/><path d="M3 5.2 H8 V0.2" fill="none" stroke="#3c3f41" stroke-width="0.9"/><rect x="0" y="10.2" width="19" height="8.9" fill="#5a9d43"/><text x="4.2" y="18" font-family="Liberation Sans, sans-serif" font-weight="bold" font-size="8.6" text-anchor="middle" fill="#231f20" fill-opacity="0.68" letter-spacing="0">C</text></svg><span class="fl"><span class="t" id="f17" style="transform:scaleX(1.0710);transform-origin:0 50%;">Pyramid layout pt</span></span></div>
<div class="frow" style="top:452px"><svg class="fi" width="20" height="20" viewBox="0 0 20 20"><path d="M8 0 H15.1 V8.7 H3 V5 Z" fill="#87939a"/><path d="M3 5 L8 0 V5 Z" fill="#aab4ba"/><path d="M3 5.2 H8 V0.2" fill="none" stroke="#3c3f41" stroke-width="0.9"/><rect x="0" y="10.2" width="19" height="8.9" fill="#5a9d43"/><text x="4.6" y="18" font-family="Liberation Sans, sans-serif" font-weight="bold" font-size="8.6" text-anchor="middle" fill="#231f20" fill-opacity="0.68" letter-spacing="0">M</text></svg><span class="fl"><span class="t" id="f18" style="transform:scaleX(1.0690);transform-origin:0 50%;">Pyramid mytemplate mako</span></span></div>
<div class="frow" style="top:477px"><svg class="fi" width="20" height="20" viewBox="0 0 20 20"><path d="M8 0 H15.1 V8.7 H3 V5 Z" fill="#87939a"/><path d="M3 5 L8 0 V5 Z" fill="#aab4ba"/><path d="M3 5.2 H8 V0.2" fill="none" stroke="#3c3f41" stroke-width="0.9"/><rect x="0" y="10.2" width="19" height="8.9" fill="#5a9d43"/><text x="4.6" y="18" font-family="Liberation Sans, sans-serif" font-weight="bold" font-size="8.6" text-anchor="middle" fill="#231f20" fill-opacity="0.68" letter-spacing="0">M</text></svg><span class="fl"><span class="t" id="f19" style="transform:scaleX(1.0550);transform-origin:0 50%;">Pyramid layout mako</span></span></div>
<div class="frow" style="top:502px"><svg class="fi" width="20" height="20" viewBox="0 0 20 20"><path d="M8 0 H15.1 V8.7 H3 V5 Z" fill="#87939a"/><path d="M3 5 L8 0 V5 Z" fill="#aab4ba"/><path d="M3 5.2 H8 V0.2" fill="none" stroke="#3c3f41" stroke-width="0.9"/><rect x="0" y="10.2" width="19" height="8.9" fill="#5a9d43"/><text x="6" y="18" font-family="Liberation Sans, sans-serif" font-weight="bold" font-size="8.6" text-anchor="middle" fill="#231f20" fill-opacity="0.68" letter-spacing="0">J2</text></svg><span class="fl"><span class="t" id="f20" style="transform:scaleX(1.0700);transform-origin:0 50%;">Pyramid mytemplate jinja2</span></span></div>
<div class="frow" style="top:527px"><svg class="fi" width="20" height="20" viewBox="0 0 20 20"><path d="M8 0 H15.1 V8.7 H3 V5 Z" fill="#87939a"/><path d="M3 5 L8 0 V5 Z" fill="#aab4ba"/><path d="M3 5.2 H8 V0.2" fill="none" stroke="#3c3f41" stroke-width="0.9"/><rect x="0" y="10.2" width="19" height="8.9" fill="#5a9d43"/><text x="6" y="18" font-family="Liberation Sans, sans-serif" font-weight="bold" font-size="8.6" text-anchor="middle" fill="#231f20" fill-opacity="0.68" letter-spacing="0">J2</text></svg><span class="fl"><span class="t" id="f21" style="transform:scaleX(1.0530);transform-origin:0 50%;">Pyramid layout jinja2</span></span></div>
<div class="frow" style="top:552px"><svg class="fi" width="20" height="20" viewBox="0 0 20 20" style="overflow:visible"><circle cx="9.15" cy="7.5" r="7.7" fill="#00a91b"/><path d="M4.6 13.4 L7.7 18 L11.4 14.6 Z" fill="#00a91b"/><path d="M11.27 8.38 L13.77 9.41" stroke="#087a15" stroke-width="1.5" stroke-linecap="round"/><path d="M10.03 9.62 L11.06 12.12" stroke="#087a15" stroke-width="1.5" stroke-linecap="round"/><path d="M8.27 9.62 L7.24 12.12" stroke="#087a15" stroke-width="1.5" stroke-linecap="round"/><path d="M7.03 8.38 L4.53 9.41" stroke="#087a15" stroke-width="1.5" stroke-linecap="round"/><path d="M7.03 6.62 L4.53 5.59" stroke="#087a15" stroke-width="1.5" stroke-linecap="round"/><path d="M8.27 5.38 L7.24 2.88" stroke="#087a15" stroke-width="1.5" stroke-linecap="round"/><path d="M10.03 5.38 L11.06 2.88" stroke="#087a15" stroke-width="1.5" stroke-linecap="round"/><path d="M11.27 6.62 L13.77 5.59" stroke="#087a15" stroke-width="1.5" stroke-linecap="round"/></svg><span class="fl"><span class="t" id="f22" style="transform:scaleX(1.0630);transform-origin:0 50%;">Gherkin feature file</span></span></div>
  </div>
  <div id="vthumb"></div>
  <div id="hthumb"></div>
</div>

<div id="ed"><div id="code"><span class="t" id="c1"># _*_coding: utf-8 _*_</span>
<span class="t" id="c2"># @Time: <span class="v">${DATE}</span> <span class="v">${TIME}</span></span>
<span class="t" id="c3"># @Author: yhgh</span>
<span class="t" id="c4"># @Describe:</span></div></div>

<div class="cb" style="left:598px"><svg width="15" height="15" viewBox="0 0 15 15" style="position:absolute;left:0;top:0"><path d="M2.6 8 L6 11.6 L12.6 2.8" fill="none" stroke="#a9abad" stroke-width="2"/></svg></div>
<div class="cbl" style="left:623px"><span class="t" id="cb1" style="transform:scaleX(1.0790);transform-origin:0 50%;"><u>R</u>eformat according to style</span></div>
<div class="cb" style="left:879px"></div>
<div class="cbl" style="left:904px"><span class="t" id="cb2" style="transform:scaleX(1.0410);transform-origin:0 50%;">Enable <u>L</u>ive Templates</span></div>
<div id="descL"><span class="t" id="dl" style="transform:scaleX(1.0880);transform-origin:0 50%;">Description:</span></div>
<div id="desc"><div class="hr"></div><div class="tx"><span class="lk"><span class="t" id="d1" style="transform:scaleX(1.0480);transform-origin:0 50%;">Apache Velocity</span></span><span class="abs" style="left:100.6px;top:0"><span class="t" id="d2" style="transform:scaleX(1.1060);transform-origin:0 50%;">template language is used</span></span></div></div>

<div id="sep"></div>
<div id="help">?</div>
<div class="btn" id="ok"><span class="t" id="bok" style="transform:scaleX(0.9750);transform-origin:50% 50%;">OK</span></div>
<div class="btn" id="cancel"><span class="t" id="bca" style="transform:scaleX(0.9970);transform-origin:50% 50%;">Cancel</span></div>
<div class="btn" id="apply"><span class="t" id="bap" style="transform:scaleX(1.1100);transform-origin:50% 50%;">Apply</span></div>

<div class="red" style="left:37px;top:363px;width:240px;height:41px"></div>
<div class="red" style="left:320px;top:512px;width:261px;height:27px"></div>
<div class="red" style="left:588px;top:167px;width:292px;height:146px"></div>
</body>
</html>
